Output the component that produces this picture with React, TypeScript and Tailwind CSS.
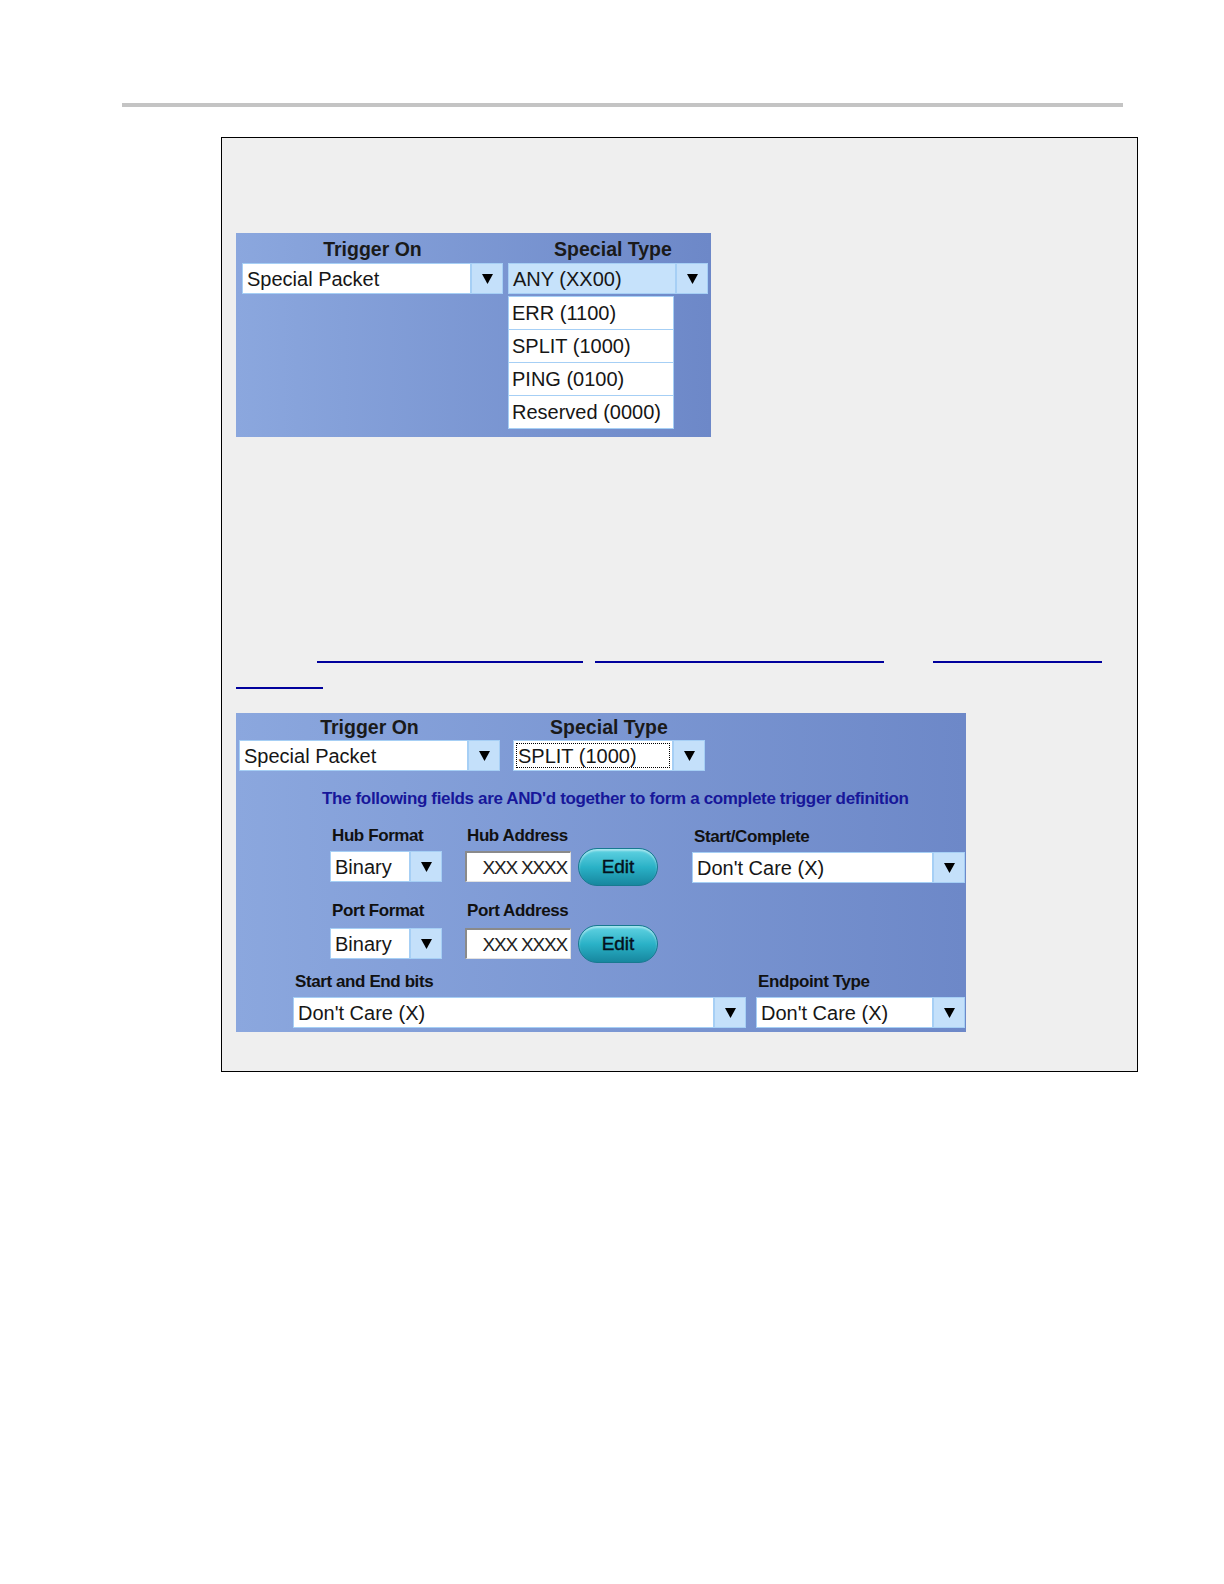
import React from 'react';

const font = "font-['Liberation_Sans',Arial,sans-serif]";

const Arrow = () => (
  <svg width="11" height="11" viewBox="0 0 11 11">
    <polygon points="0,1 11,1 5.5,11" fill="#000" />
  </svg>
);

type SelectProps = { value: string; width: string; highlight?: boolean; focus?: boolean };

const Select = ({ value, width, highlight, focus }: SelectProps) => (
  <div className={`flex h-[31px] ${width}`}>
    <div
      className={`flex-1 flex items-stretch border border-[#a6cff5] p-[2px] ${highlight ? 'bg-[#c6e2fb]' : 'bg-white'}`}
    >
      <div
        className={`flex-1 flex items-center px-[1px] text-[20px] leading-none text-[#161616] ${focus ? 'border border-dotted border-black' : 'border border-transparent'}`}
      >
        {value}
      </div>
    </div>
    <div className="w-[32px] flex items-center justify-center bg-[#c4e0fa] border border-[#a6cff5]">
      <Arrow />
    </div>
  </div>
);

const Label = ({ children }: { children: React.ReactNode }) => (
  <div className="h-[20px] text-[17px] leading-[20px] font-bold text-[#111] tracking-[-0.4px] pl-[2px]">{children}</div>
);

const AddressField = () => (
  <div className="flex items-center h-[31px] gap-[7px]">
    <div className="w-[106px] h-[31px] bg-white border-t-2 border-l-2 border-t-[#8a8a8a] border-l-[#8a8a8a] border-b border-r border-b-[#e2e2e2] border-r-[#e2e2e2] flex items-center justify-end pr-[3px]">
      <span className="text-[19px] leading-none text-[#222] tracking-[-1.2px]">XXX XXXX</span>
    </div>
    <div className="w-[80px] h-[38px] shrink-0 rounded-full border border-[#177a90] bg-gradient-to-b from-[#5fd3e3] via-[#2ab2c7] to-[#17879f] shadow-[inset_0_2px_2px_rgba(255,255,255,0.45)] flex items-center justify-center">
      <span className="text-[19px] leading-none text-[#04121c] [-webkit-text-stroke:0.4px_#04121c]">Edit</span>
    </div>
  </div>
);

const panel = 'bg-gradient-to-r from-[#8ba7de] to-[#6d88c8]';

export default function App() {
  return (
    <div className={`w-full bg-white pb-[40px] ${font}`}>
      <div className="pt-[103px] pl-[122px]">
        <div className="w-[1001px] h-[4px] bg-[#c4c4c4]" />
      </div>

      <div className="ml-[221px] mt-[30px] w-[917px] h-[935px] border border-black bg-[#efefef] pl-[14px] pt-[95px]">
        {/* Top panel: dropdown open */}
        <div className={`w-[475px] h-[204px] ${panel} flex gap-[5px] pl-[6px]`}>
          <div className="w-[261px]">
            <div className="h-[30px] text-[19.5px] leading-[32px] font-bold text-[#1a1a1a] text-center">Trigger On</div>
            <Select value="Special Packet" width="w-[261px]" />
          </div>
          <div className="w-[200px]">
            <div className="h-[30px] text-[19.5px] leading-[32px] font-bold text-[#1a1a1a] text-center pl-[10px]">Special Type</div>
            <Select value="ANY (XX00)" width="w-[200px]" highlight />
            <div className="mt-[2px] w-[166px] flex flex-col">
              {['ERR (1100)', 'SPLIT (1000)', 'PING (0100)', 'Reserved (0000)'].map((o) => (
                <div
                  key={o}
                  className="h-[34px] bg-white border border-[#a6cff5] -mt-px first:mt-0 flex items-center px-[3px] text-[20px] leading-none text-[#161616]"
                >
                  {o}
                </div>
              ))}
            </div>
          </div>
        </div>

        {/* Links */}
        <div className="mt-[200px] w-[880px] text-[16px] leading-[26px]">
          <div className="flex items-end h-[26px]">
            <span className="ml-[81px] w-[266px] border-b-2 border-[#00009c]" />
            <span className="ml-[12px] w-[289px] border-b-2 border-[#00009c]" />
            <span className="ml-[49px] w-[169px] border-b-2 border-[#00009c]" />
          </div>
          <div className="flex items-end h-[26px]">
            <span className="w-[87px] border-b-2 border-[#00009c]" />
          </div>
        </div>

        {/* Bottom panel */}
        <div className={`mt-[24px] w-[730px] h-[319px] ${panel} pl-[3px]`}>
          <div className="flex gap-[13px]">
            <div className="w-[261px]">
              <div className="h-[27px] text-[19.5px] leading-[28px] font-bold text-[#1a1a1a] text-center">Trigger On</div>
              <Select value="Special Packet" width="w-[261px]" />
            </div>
            <div className="w-[192px]">
              <div className="h-[27px] text-[19.5px] leading-[28px] font-bold text-[#1a1a1a] text-center">Special Type</div>
              <Select value="SPLIT (1000)" width="w-[192px]" focus />
            </div>
          </div>

          <div className="mt-[18px] pl-[83px] text-[17px] leading-[20px] font-bold text-[#17179a] tracking-[-0.35px]">
            The following fields are AND'd together to form a complete trigger definition
          </div>

          <div className="mt-[17px] pl-[91px] flex">
            <div className="w-[112px]">
              <Label>Hub Format</Label>
              <div className="mt-[5px]">
                <Select value="Binary" width="w-[112px]" />
              </div>
            </div>
            <div className="ml-[23px]">
              <Label>Hub Address</Label>
              <div className="mt-[5px]">
                <AddressField />
              </div>
            </div>
            <div className="ml-[34px] w-[273px]">
              <div className="mt-[1px]">
                <Label>Start/Complete</Label>
              </div>
              <div className="mt-[5px]">
                <Select value="Don't Care (X)" width="w-[273px]" />
              </div>
            </div>
          </div>

          <div className="mt-[18px] pl-[91px] flex">
            <div className="w-[112px]">
              <Label>Port Format</Label>
              <div className="mt-[7px]">
                <Select value="Binary" width="w-[112px]" />
              </div>
            </div>
            <div className="ml-[23px]">
              <Label>Port Address</Label>
              <div className="mt-[7px]">
                <AddressField />
              </div>
            </div>
          </div>

          <div className="mt-[13px] pl-[54px] flex">
            <div className="w-[453px]">
              <Label>Start and End bits</Label>
              <div className="mt-[5px]">
                <Select value="Don't Care (X)" width="w-[453px]" />
              </div>
            </div>
            <div className="ml-[10px] w-[209px]">
              <Label>Endpoint Type</Label>
              <div className="mt-[5px]">
                <Select value="Don't Care (X)" width="w-[209px]" />
              </div>
            </div>
          </div>
        </div>
      </div>
    </div>
  );
}
